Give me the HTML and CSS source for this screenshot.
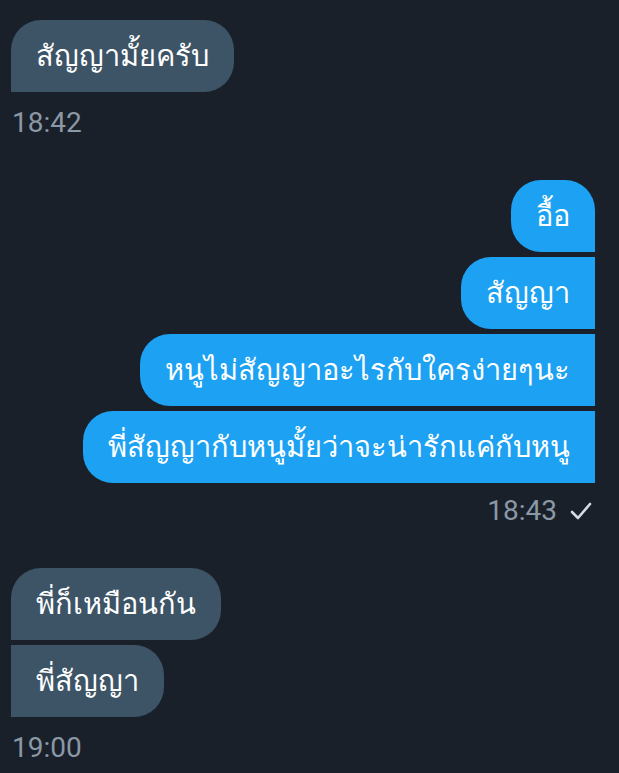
FILE: index.html
```html
<!DOCTYPE html>
<html lang="th">
<head>
<meta charset="utf-8">
<link rel="stylesheet" href="styles.css">
</head>
<body>
<div class="chat">
  <div class="group received first-group">
    <div class="bubble single">สัญญามั้ยครับ</div>
    <div class="meta">18:42</div>
  </div>
  <div class="group sent">
    <div class="bubble top">อื้อ</div>
    <div class="bubble mid">สัญญา</div>
    <div class="bubble mid">หนูไม่สัญญาอะไรกับใครง่ายๆนะ</div>
    <div class="bubble mid">พี่สัญญากับหนูมั้ยว่าจะน่ารักแค่กับหนู</div>
    <div class="meta sent-meta">18:43
      <svg class="check" width="22" height="18" viewBox="0 0 22 18"><path d="M2 10 L8 16 L20 2" fill="none" stroke="#d4dbe2" stroke-width="2.6" stroke-linecap="round" stroke-linejoin="round"/></svg>
    </div>
  </div>
  <div class="group received">
    <div class="bubble top">พี่ก็เหมือนกัน</div>
    <div class="bubble mid">พี่สัญญา</div>
    <div class="meta">19:00</div>
  </div>
</div>
</body>
</html>
```
FILE: styles.css
```css
html, body {
  margin: 0;
  padding: 0;
  background: #19202a;
}
.chat {
  display: flex;
  flex-direction: column;
  padding: 20px 24px 0 11px;
  font-family: Roboto, "Noto Sans", sans-serif;
}
.group {
  display: flex;
  flex-direction: column;
  gap: 5px;
  margin-bottom: 41px;
}
.received { align-items: flex-start; }
.sent { align-items: flex-end; }
.bubble {
  height: 72px;
  box-sizing: border-box;
  display: flex;
  align-items: center;
  padding: 0 25px;
  font-size: 29px;
  color: #ffffff;
  white-space: nowrap;
}
.received .bubble { background: #3d5466; }
.sent .bubble { background: #1da1f2; }
.received .single { border-radius: 30px 30px 30px 0; }
.received .top { border-radius: 30px 30px 30px 0; }
.received .mid { border-radius: 0 30px 30px 0; }
.sent .top { border-radius: 30px 30px 0 30px; }
.sent .mid { border-radius: 30px 0 0 30px; }
.meta {
  font-size: 28px;
  line-height: 33px;
  color: #8b98a5;
  margin-top: 9px;
  padding-left: 1px;
  display: flex;
  align-items: center;
  gap: 13px;
}
.sent-meta { margin-top: 6px; padding-right: 3px; }
.check { display: block; }
```
